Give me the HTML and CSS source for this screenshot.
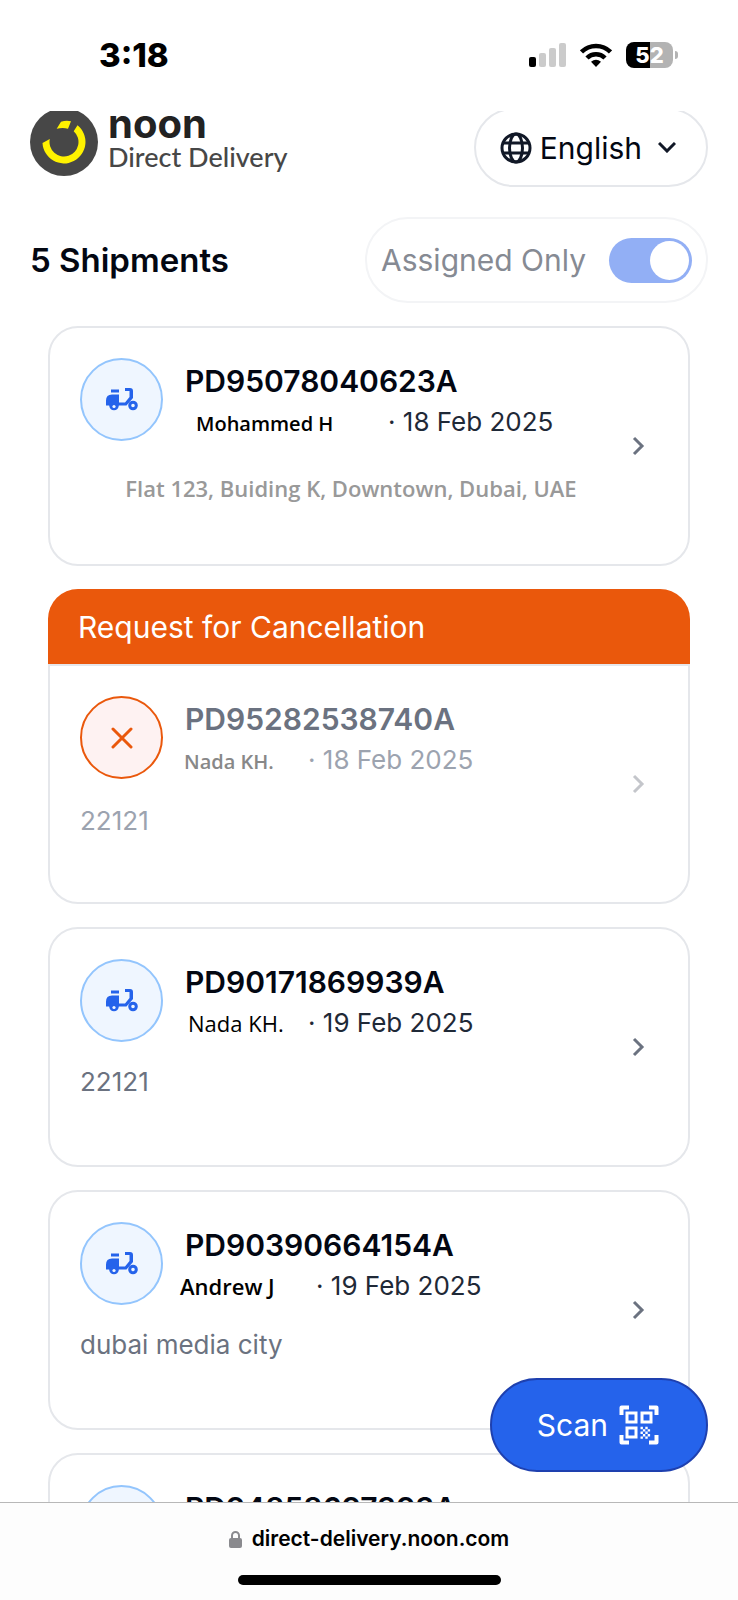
FILE: index.html
```html
<!DOCTYPE html>
<html lang="en">
<head>
  <meta charset="UTF-8" />
  <meta name="viewport" content="width=device-width, initial-scale=1.0" />
  <title>noon Direct Delivery</title>
  <link rel="stylesheet" href="styles.css">
</head>
<body>
  <svg class="sprite" aria-hidden="true">
    <symbol id="scooter" viewBox="0 0 32 23">
      <path d="M5 1.500h8v3H5z" />
      <path d="M6 6.500h7v8h6l4.500-5.500V3H19V0h5q3 0 3 3v7l-6.500 7.500H0V12.500q0-6 6-6z" />
      <circle cx="8" cy="17.500" r="4.800" />
      <circle cx="8" cy="18.500" r="1.600" fill="#eff6ff" />
      <circle cx="27" cy="17.500" r="3.300" fill="none" stroke="currentColor" stroke-width="3" />
    </symbol>
    <symbol id="chevron" viewBox="0 0 32 32">
      <path d="M12 8l8 8l-8 8" fill="none" stroke="currentColor" stroke-width="3" />
    </symbol>
  </svg>

  <div class="status-bar">
    <div class="time">3:18</div>
    <div class="status-icons">
      <svg width="37" height="24" viewBox="0 0 37 24">
        <rect x="0" y="14" width="7" height="10" rx="2" />
        <g fill="#cbcbcb">
          <rect x="10" y="10" width="7" height="14" rx="2" />
          <rect x="20" y="5" width="7" height="19" rx="2" />
          <rect x="30" y="0" width="7" height="24" rx="2" />
        </g>
      </svg>
      <svg width="32" height="24" viewBox="0 0 32 24">
        <g fill="none" stroke="#000" stroke-width="4.500">
          <path d="M1.500 9a20.500 20.500 0 0 1 29 0" />
          <path d="M7 15a12.700 12.700 0 0 1 18 0" />
        </g>
        <path d="M16 24l-5-5.300q5-4 10 0z" />
      </svg>
      <div class="battery">52</div>
    </div>
  </div>

  <main class="screen">
    <header class="header">
      <div class="brand">
        <svg width="68" height="68" viewBox="0 0 68 68">
          <circle cx="34" cy="34" r="34" fill="#474747" />
          <path d="M12.500 35L19.800 31A14.500 14.500 0 1 0 43.700 23.200L47.500 17.200A21.500 21.500 0 1 1 12.500 35z" fill="#fff200" />
          <path d="M26.700 20.800L31 13.700q5-1.500 10-.500l-3 7.500q-5.500-1.500-11.300.100z" fill="#fff200" />
        </svg>
        <div class="brand-text">
          <div class="brand-name">noon</div>
          <div class="brand-sub">Direct Delivery</div>
        </div>
      </div>
      <button class="language" type="button">
        <svg width="32" height="32" viewBox="0 0 32 32" fill="none" stroke="#111827" stroke-width="3">
          <circle cx="16" cy="16" r="14" />
          <ellipse cx="16" cy="16" rx="6.500" ry="14" />
          <path d="M3 11h26M3 21h26" />
        </svg>
        <span>English</span>
        <svg class="caret" width="18" height="11" viewBox="0 0 18 11" fill="none" stroke="#111827" stroke-width="3">
          <path d="M1 1l8 8l8-8" />
        </svg>
      </button>
    </header>

    <div class="toolbar">
      <h1 class="count">5 Shipments</h1>
      <label class="filter">
        <span>Assigned Only</span>
        <input class="switch" type="checkbox" role="switch" checked>
      </label>
    </div>

    <div class="list">
      <a class="card" href="#">
        <div class="card-body">
          <div class="card-main">
            <div class="card-top">
              <div class="badge"><svg width="32" height="23"><use href="#scooter" /></svg></div>
              <div class="info">
                <div class="code">PD95078040623A</div>
                <div class="meta">
                  <span class="name name-long">Mohammed H</span>
                  <span class="date">· 18 Feb 2025</span>
                </div>
              </div>
            </div>
            <div class="address address-full">Flat 123, Buiding K, Downtown, Dubai, UAE</div>
          </div>
          <svg class="chevron" width="32" height="32"><use href="#chevron" /></svg>
        </div>
      </a>

      <a class="card cancelled" href="#">
        <div class="banner">Request for Cancellation</div>
        <div class="card-body">
          <div class="card-main">
            <div class="card-top">
              <div class="badge">
                <svg width="22" height="22" viewBox="0 0 22 22" fill="none" stroke="currentColor" stroke-width="3" stroke-linecap="round">
                  <path d="M2 2l18 18M20 2l-18 18" />
                </svg>
              </div>
              <div class="info">
                <div class="code">PD95282538740A</div>
                <div class="meta">
                  <span class="name name-inset">Nada KH.</span>
                  <span class="date">· 18 Feb 2025</span>
                </div>
              </div>
            </div>
            <div class="address">22121</div>
          </div>
          <svg class="chevron" width="32" height="32"><use href="#chevron" /></svg>
        </div>
      </a>

      <a class="card" href="#">
        <div class="card-body">
          <div class="card-main">
            <div class="card-top">
              <div class="badge"><svg width="32" height="23"><use href="#scooter" /></svg></div>
              <div class="info">
                <div class="code">PD90171869939A</div>
                <div class="meta">
                  <span class="name name-light">Nada KH.</span>
                  <span class="date">· 19 Feb 2025</span>
                </div>
              </div>
            </div>
            <div class="address">22121</div>
          </div>
          <svg class="chevron" width="32" height="32"><use href="#chevron" /></svg>
        </div>
      </a>

      <a class="card" href="#">
        <div class="card-body">
          <div class="card-main">
            <div class="card-top">
              <div class="badge"><svg width="32" height="23"><use href="#scooter" /></svg></div>
              <div class="info">
                <div class="code">PD90390664154A</div>
                <div class="meta">
                  <span class="name name-medium">Andrew J</span>
                  <span class="date">· 19 Feb 2025</span>
                </div>
              </div>
            </div>
            <div class="address">dubai media city</div>
          </div>
          <svg class="chevron" width="32" height="32"><use href="#chevron" /></svg>
        </div>
      </a>

      <a class="card" href="#">
        <div class="card-body">
          <div class="card-main">
            <div class="card-top">
              <div class="badge"><svg width="32" height="23"><use href="#scooter" /></svg></div>
              <div class="info">
                <div class="code">PD94858697393A</div>
              </div>
            </div>
          </div>
          <svg class="chevron" width="32" height="32"><use href="#chevron" /></svg>
        </div>
      </a>
    </div>

    <button class="scan" type="button">
      <span>Scan</span>
      <svg width="40" height="40" viewBox="0 0 40 40" fill="none" stroke="#fff">
        <path d="M10 2.500H2.500V10M30 2.500h7.500V10M10 37.500H2.500V30M30 37.500h7.500V30" stroke-width="4" stroke-linejoin="round" />
        <path d="M8 8h9v9H8zM23 8h9v9h-9zM8 23h9v9H8z" stroke-width="3" />
        <path d="M21.500 23h2.400m2.400 0h2.400m-4.800 2.400h2.400m2.400 0h2.400m-9.600 2.400h2.400m2.400 0h2.400m-4.800 2.400h2.400m2.400 0h2.400m-9.600 2.400h2.400m2.400 0h2.400" stroke-width="2.400" />
      </svg>
    </button>
  </main>

  <footer class="browser-bar">
    <div class="url">
      <svg width="13" height="17" viewBox="0 0 13 17" fill="#8a8a8e">
        <rect x="0" y="7" width="13" height="10" rx="2" />
        <path d="M3 8V4.500a3.500 3.500 0 0 1 7 0V8" fill="none" stroke="#8a8a8e" stroke-width="2" />
      </svg>
      <span>direct-delivery.noon.com</span>
    </div>
    <div class="home-indicator"></div>
  </footer>
</body>
</html>
```

FILE: styles.css
```css
* {
  box-sizing: border-box;
}
body {
  font-family: Inter, "Liberation Sans", sans-serif;
  margin: 0;
  height: 100vh;
  display: flex;
  flex-direction: column;
  background: #fff;
  color: #030712;
}
button {
  font-family: inherit;
  cursor: pointer;
}
svg {
  flex-shrink: 0;
}
.sprite {
  position: absolute;
  width: 0;
  height: 0;
}

/* phone status bar */
.status-bar {
  flex-shrink: 0;
  height: 111px;
  padding: 0 62px 2px 99px;
  display: flex;
  align-items: center;
  justify-content: space-between;
  color: #000;
}
.time {
  font-size: 33px;
  font-weight: 800;
}
.status-icons {
  display: flex;
  align-items: center;
  gap: 14px;
}
.battery {
  position: relative;
  width: 47px;
  height: 26px;
  margin-right: 3px;
  border-radius: 8px;
  background: linear-gradient(90deg, #000 52%, #b3b3b3 52%);
  color: #fff;
  font-size: 22px;
  line-height: 26px;
  font-weight: 800;
  text-align: center;
}
.battery::after {
  content: "";
  position: absolute;
  left: 49px;
  top: 9px;
  width: 3px;
  height: 8px;
  border-radius: 0 4px 4px 0;
  background: #b3b3b3;
}

/* page */
.screen {
  position: relative;
  flex: 1;
  min-height: 0;
  overflow: hidden;
  padding: 0 30px;
}
.header {
  display: flex;
  justify-content: space-between;
  margin-top: -3px;
  height: 79px;
}
.brand {
  display: flex;
  gap: 10px;
}
.brand-name {
  font-size: 40px;
  line-height: 32px;
  font-weight: 700;
  color: #222;
}
.brand-sub {
  font-family: Lato, sans-serif;
  font-size: 27px;
  line-height: 34px;
  font-weight: 500;
  color: #474747;
}
.language {
  display: flex;
  align-items: center;
  gap: 8px;
  padding: 0 30px 0 24px;
  border: 2px solid #e5e7eb;
  border-radius: 40px;
  background: #fff;
  color: #030712;
  font-size: 30px;
}
.caret {
  margin-left: 8px;
}
.toolbar {
  display: flex;
  align-items: center;
  justify-content: space-between;
  margin-top: 30px;
}
.count {
  margin: 0;
  font-size: 33px;
  font-weight: 600;
}
.filter {
  display: flex;
  align-items: center;
  gap: 23px;
  height: 86px;
  padding: 0 14px;
  border: 2px solid #f3f4f6;
  border-radius: 43px;
  color: #868a93;
  font-size: 30px;
}
.switch {
  appearance: none;
  width: 83px;
  height: 45px;
  margin: 0;
  padding: 3px;
  border-radius: 24px;
  background: #92aff5;
  display: flex;
  justify-content: flex-end;
}
.switch::before {
  content: "";
  width: 39px;
  height: 39px;
  border-radius: 50%;
  background: #fff;
}
.switch:not(:checked) {
  justify-content: flex-start;
  background: #d1d5db;
}

/* shipments */
.list {
  display: flex;
  flex-direction: column;
  gap: 23px;
  padding: 23px 18px;
}
.card {
  color: inherit;
  text-decoration: none;
}
.card-body {
  display: flex;
  align-items: center;
  height: 240px;
  padding: 30px 34px 30px 30px;
  border: 2px solid #e5e7eb;
  border-radius: 30px;
}
.card-main {
  flex: 1;
  align-self: stretch;
}
.card-top {
  display: flex;
  gap: 17px;
}
.badge {
  display: flex;
  align-items: center;
  justify-content: center;
  width: 83px;
  height: 83px;
  border: 2px solid #93c5fd;
  border-radius: 50%;
  background: #eff6ff;
  color: #2563eb;
  fill: currentColor;
}
.info {
  padding-top: 2px;
}
.code {
  padding-left: 5px;
  font-size: 30px;
  line-height: 42px;
  font-weight: 600;
}
.meta {
  display: flex;
  align-items: baseline;
  line-height: 40px;
}
.name {
  width: 128px;
  font-family: "Open Sans", sans-serif;
  font-size: 20px;
  font-weight: 600;
  color: #000;
}
.name-inset {
  padding-left: 4px;
}
.name-long {
  width: 208px;
  padding-left: 16px;
}
.name-medium {
  width: 136px;
  font-size: 22px;
}
.name-light {
  padding-left: 8px;
  font-size: 22px;
  font-weight: 400;
}
.date {
  font-size: 26px;
  color: #1f2937;
}
.address {
  margin-top: 20px;
  font-size: 26px;
  line-height: 38px;
  color: #6b7280;
}
.address-full {
  margin-top: 25px;
  font-family: "Open Sans", sans-serif;
  font-size: 22px;
  font-weight: 600;
  text-align: center;
  color: #999;
}
.chevron {
  color: #6b7280;
}

/* cancelled shipment */
.banner {
  height: 75px;
  padding: 0 30px;
  border-radius: 30px 30px 0 0;
  background: #ea580c;
  color: #fff;
  font-size: 30px;
  line-height: 76px;
}
.cancelled .card-body {
  border-radius: 0 0 30px 30px;
}
.cancelled .badge {
  border-color: #ea580c;
  background: #fef2f2;
  color: #ea580c;
  fill: none;
}
.cancelled .code {
  color: #6b7280;
}
.cancelled .name {
  color: #888;
}
.cancelled .date,
.cancelled .address {
  color: #9ca3af;
}
.cancelled .chevron {
  color: #c4c6cb;
}

.scan {
  position: absolute;
  right: 30px;
  bottom: 30px;
  display: flex;
  align-items: center;
  gap: 11px;
  height: 94px;
  padding: 0 47px 0 45px;
  border: 2px solid #1e40af;
  border-radius: 47px;
  background: #2563eb;
  color: #fff;
  font-size: 30px;
}

/* browser bar */
.browser-bar {
  flex-shrink: 0;
  height: 98px;
  padding-top: 20px;
  display: flex;
  flex-direction: column;
  align-items: center;
  gap: 20px;
  border-top: 1px solid #b8b8b8;
  background: #fdfdfd;
}
.url {
  display: flex;
  align-items: center;
  gap: 10px;
  color: #000;
  font-size: 21px;
  line-height: 32px;
  font-weight: 600;
}
.home-indicator {
  width: 263px;
  height: 10px;
  border-radius: 5px;
  background: #000;
}
```
